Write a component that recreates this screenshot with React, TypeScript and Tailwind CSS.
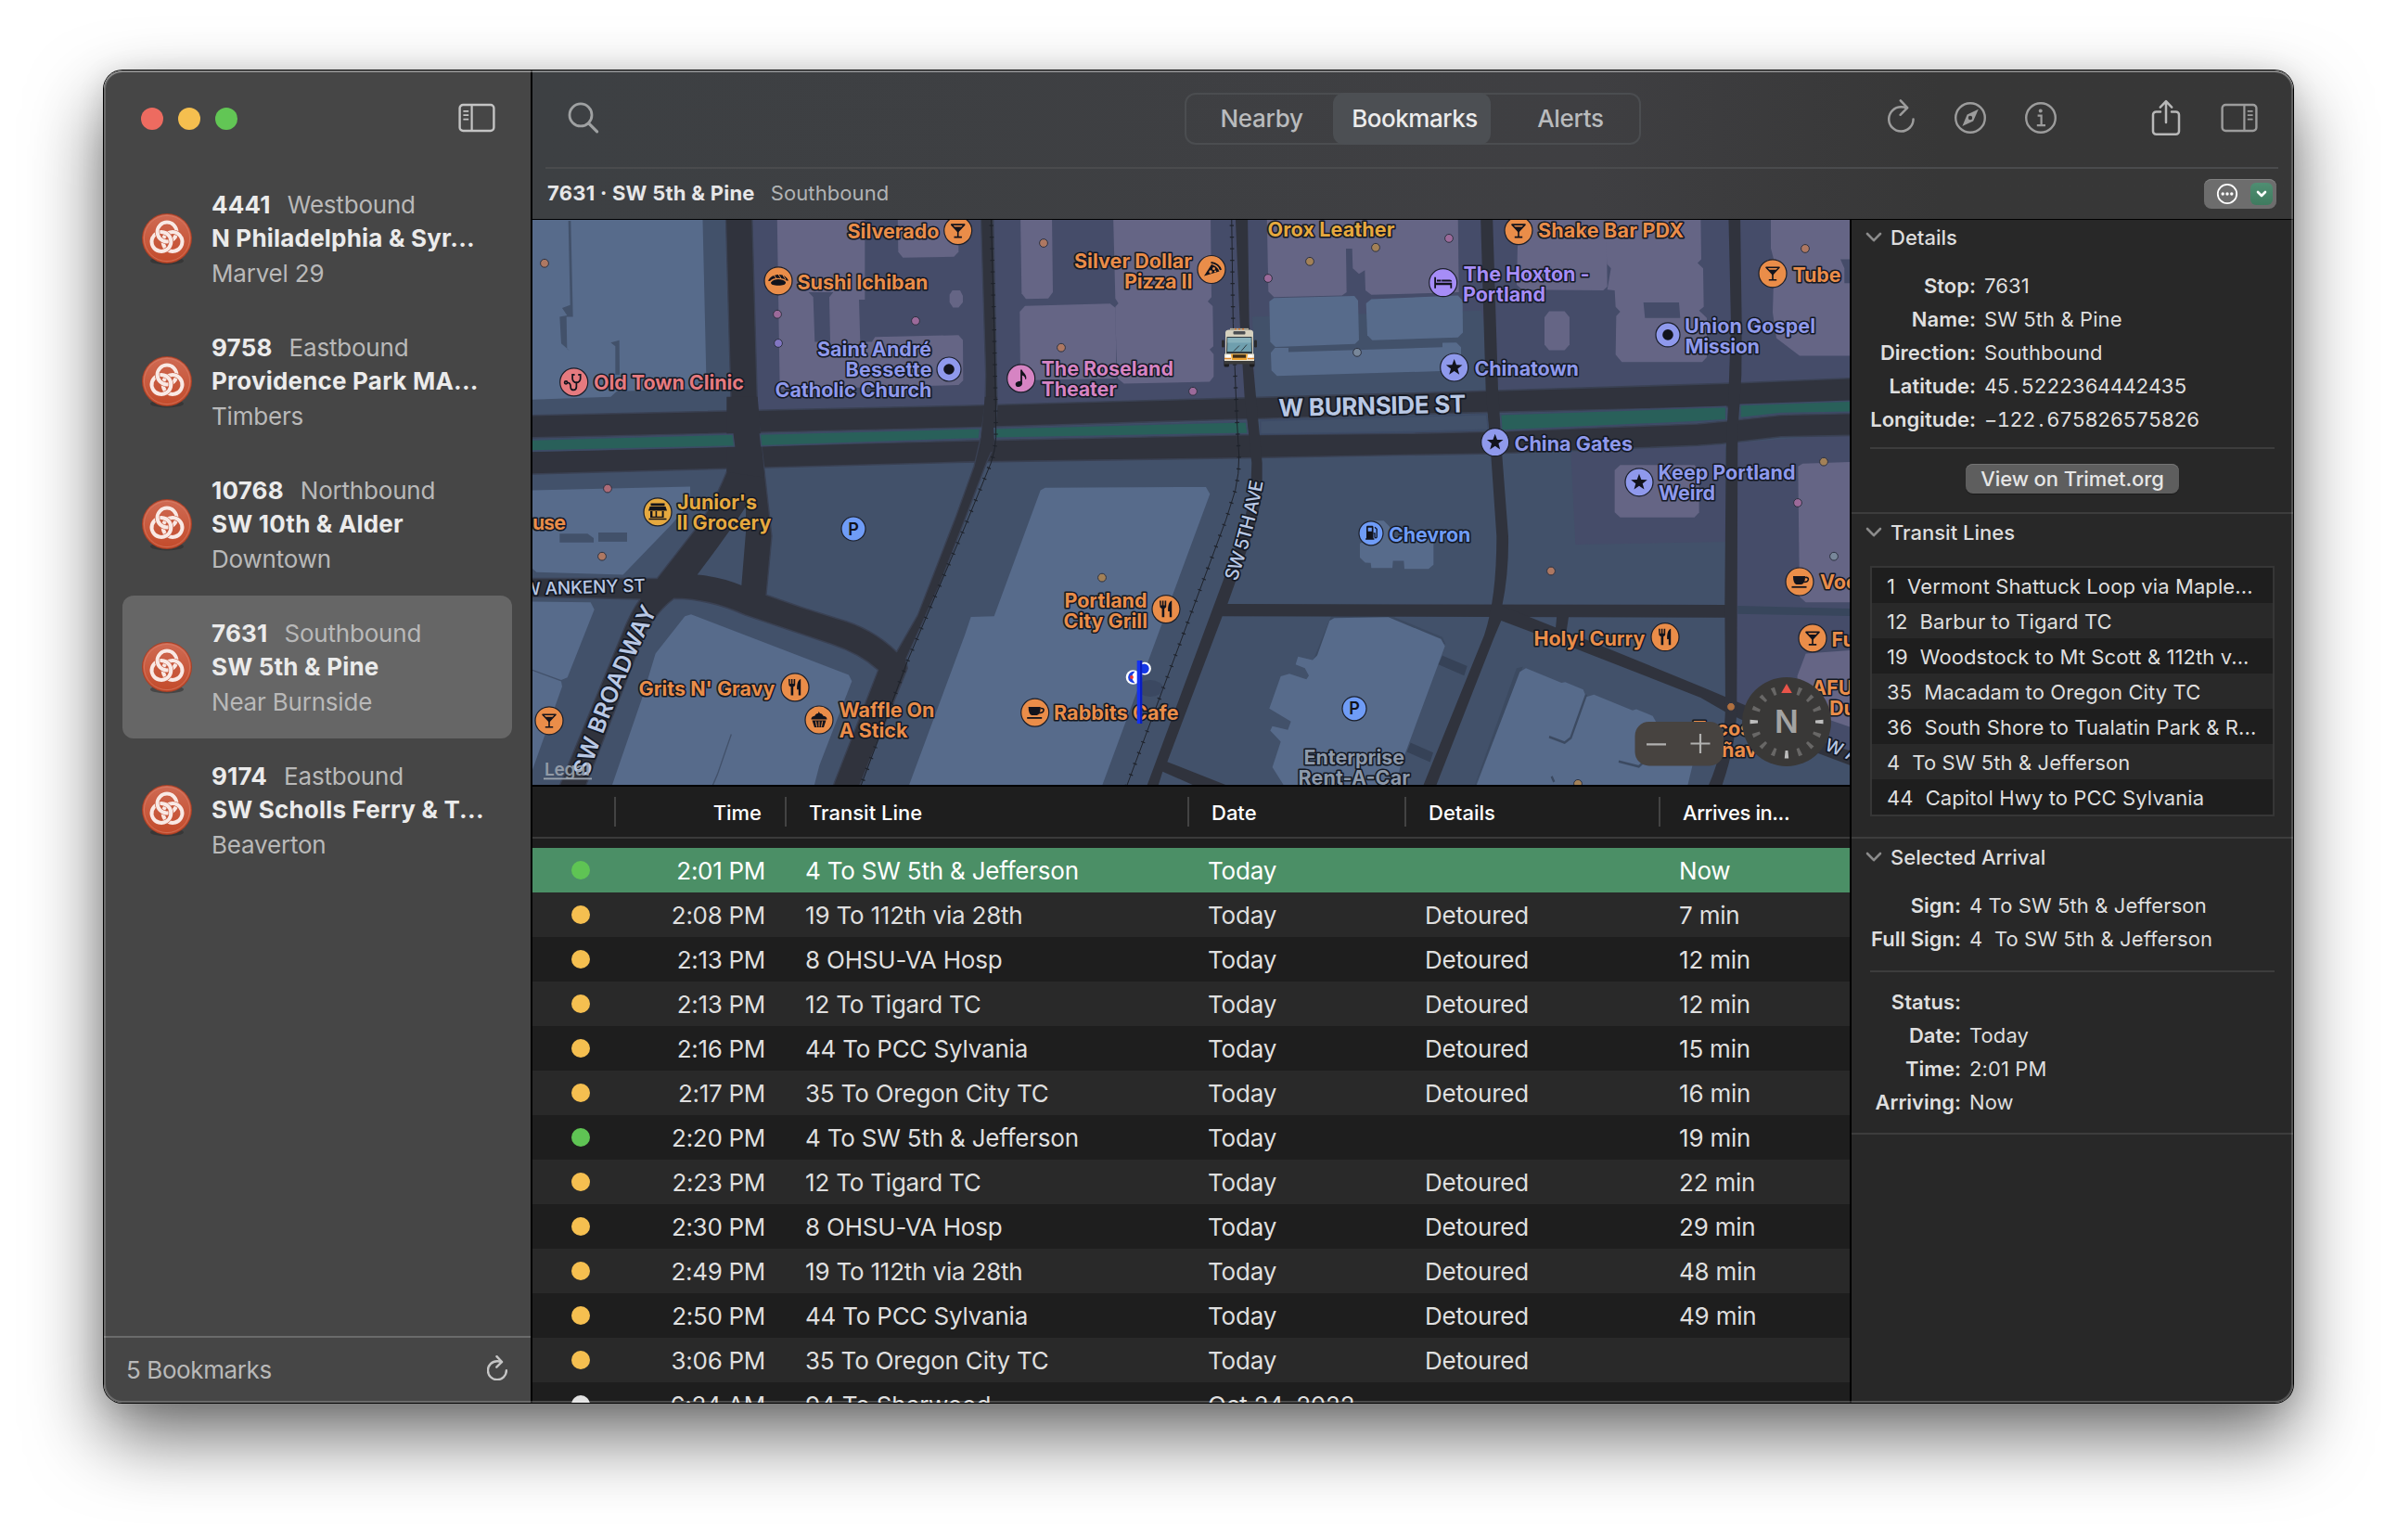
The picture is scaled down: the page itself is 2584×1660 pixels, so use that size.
import React from 'react';

/* ---------- data ---------- */

const bookmarks = [
  { id: '4441', dir: 'Westbound', name: 'N Philadelphia & Syr...', note: 'Marvel 29' },
  { id: '9758', dir: 'Eastbound', name: 'Providence Park MA...', note: 'Timbers' },
  { id: '10768', dir: 'Northbound', name: 'SW 10th & Alder', note: 'Downtown' },
  { id: '7631', dir: 'Southbound', name: 'SW 5th & Pine', note: 'Near Burnside', selected: true },
  { id: '9174', dir: 'Eastbound', name: 'SW Scholls Ferry & T...', note: 'Beaverton' },
];

const arrivals = [
  ['g', '2:01 PM', '4 To SW 5th & Jefferson', 'Today', '', 'Now'],
  ['y', '2:08 PM', '19 To 112th via 28th', 'Today', 'Detoured', '7 min'],
  ['y', '2:13 PM', '8 OHSU-VA Hosp', 'Today', 'Detoured', '12 min'],
  ['y', '2:13 PM', '12 To Tigard TC', 'Today', 'Detoured', '12 min'],
  ['y', '2:16 PM', '44 To PCC Sylvania', 'Today', 'Detoured', '15 min'],
  ['y', '2:17 PM', '35 To Oregon City TC', 'Today', 'Detoured', '16 min'],
  ['g', '2:20 PM', '4 To SW 5th & Jefferson', 'Today', '', '19 min'],
  ['y', '2:23 PM', '12 To Tigard TC', 'Today', 'Detoured', '22 min'],
  ['y', '2:30 PM', '8 OHSU-VA Hosp', 'Today', 'Detoured', '29 min'],
  ['y', '2:49 PM', '19 To 112th via 28th', 'Today', 'Detoured', '48 min'],
  ['y', '2:50 PM', '44 To PCC Sylvania', 'Today', 'Detoured', '49 min'],
  ['y', '3:06 PM', '35 To Oregon City TC', 'Today', 'Detoured', ''],
  ['w', '6:24 AM', '94 To Sherwood', 'Oct 24, 2022', '', ''],
];

const transitLines = [
  ['1', 'Vermont Shattuck Loop via Maple...'],
  ['12', 'Barbur to Tigard TC'],
  ['19', 'Woodstock to Mt Scott & 112th v...'],
  ['35', 'Macadam to Oregon City TC'],
  ['36', 'South Shore to Tualatin Park & R...'],
  ['4', 'To SW 5th & Jefferson'],
  ['44', 'Capitol Hwy to PCC Sylvania'],
];

/* ---------- icons ---------- */

function LineLogo() {
  return (
    <svg width="58" height="60" viewBox="-29 -29 58 60" className="block">
      <defs>
        <linearGradient id="badge" x1="0" y1="0" x2="0" y2="1">
          <stop offset="0" stopColor="#cf6a53" />
          <stop offset="1" stopColor="#c34b2b" />
        </linearGradient>
        <clipPath id="leftHalf">
          <rect x="-20" y="-9" width="20" height="24" />
        </clipPath>
      </defs>
      <ellipse cx="0" cy="24" rx="18" ry="4.4" fill="#2c2c2c" opacity="0.55" />
      <circle r="27" fill="#a93f25" />
      <circle r="26" fill="url(#badge)" />
      <circle r="24.6" fill="none" stroke="#dd8671" strokeWidth="1" opacity="0.55" />
      <g fill="none">
        {[0, 120, 240].map((a) => (
          <g key={a} transform={`rotate(${a})`}>
            <circle cy="-7" r="10.4" stroke="#c85a3e" strokeWidth="5.2" />
            <circle cy="-7" r="10.4" stroke="#f9e9e5" strokeWidth="4" />
          </g>
        ))}
        <g clipPath="url(#leftHalf)">
          <circle cy="-7" r="10.4" stroke="#c85a3e" strokeWidth="5.2" />
          <circle cy="-7" r="10.4" stroke="#f9e9e5" strokeWidth="4" />
        </g>
      </g>
    </svg>
  );
}

function PanelIcon({ right, color }: { right?: boolean; color: string }) {
  return (
    <svg width="40" height="32" viewBox="0 0 40 32" fill="none" stroke={color} className="block">
      <g transform={right ? 'translate(40 0) scale(-1 1)' : undefined}>
        <rect x="1.6" y="2" width="36.8" height="28" rx="3.6" strokeWidth="2.4" />
        <path d="M14.6 2v28" strokeWidth="2.2" />
        <path d="M5.4 8.8h5.8M5.4 13.2h5.8M5.4 17.6h5.8" strokeWidth="1.7" />
      </g>
    </svg>
  );
}

function Reload({ size, color, sw }: { size: number; color: string; sw: number }) {
  return (
    <svg width={size} height={size * 1.24} viewBox="0 0 29 36" fill="none" stroke={color} strokeWidth={sw} strokeLinecap="round" strokeLinejoin="round" className="block">
      <path d="M27.6 21.5A13.2 13.2 0 1 1 14.4 8.2c2 0 4.2.2 6.2 1.2" />
      <path d="M13.8 1.4l7.4 7.8-7.6 7.6" />
    </svg>
  );
}

/* ---------- sidebar ---------- */

function Sidebar() {
  return (
    <aside className="flex w-[462px] shrink-0 flex-col border-r-2 border-black bg-[#464646]">
      <div className="flex h-26 shrink-0 items-center justify-between pl-10 pr-[38px]">
        <div className="flex gap-4">
          <span className="size-6 rounded-full bg-[#ed6b60]" />
          <span className="size-6 rounded-full bg-[#f5bf4f]" />
          <span className="size-6 rounded-full bg-[#62c655]" />
        </div>
        <span className="pb-0.5">
          <PanelIcon color="#c4c4c4" />
        </span>
      </div>
      <ul className="flex flex-1 flex-col px-5">
        {bookmarks.map((b) => (
          <li key={b.id} className={`flex h-[154px] items-start rounded-xl pl-[19px] ${b.selected ? 'bg-[#666666]' : ''}`}>
            <div className="w-[77px] shrink-0 pt-12">
              <LineLogo />
            </div>
            <div className="pt-[23px] text-[26px] whitespace-nowrap">
              <div className="flex gap-[18px] leading-9">
                <span className="font-bold tracking-[0.2px] text-[#ebebeb]">{b.id}</span>
                <span className="tracking-[-0.2px] text-[#b9b9b9]">{b.dir}</span>
              </div>
              <div className="font-bold leading-9 tracking-[0.2px] text-[#ebebeb]">{b.name}</div>
              <div className="leading-10 tracking-[-0.2px] text-[#b9b9b9]">{b.note}</div>
            </div>
          </li>
        ))}
      </ul>
      <div className="flex h-[72px] shrink-0 items-center justify-between border-t-2 border-[#6a6b6b] pb-px pl-6 pr-[25px]">
        <span className="text-[26px] tracking-[-0.4px] text-[#b9b9b9]">5 Bookmarks</span>
        <span className="pb-1">
          <Reload size={22} color="#c6c6c6" sw={3.2} />
        </span>
      </div>
    </aside>
  );
}

/* ---------- toolbar ---------- */

function Toolbar() {
  return (
    <header className="flex h-[161px] shrink-0 flex-col border-b border-black bg-linear-to-r from-[#3d4043] via-[#3f3f42] via-60% to-[#373737] to-80%">
      <div className="flex h-26 items-center">
        <svg width="34" height="36" viewBox="0 0 34 36" fill="none" stroke="#9fa1a2" strokeWidth="2.8" strokeLinecap="round" className="ml-[38px] block">
          <circle cx="14" cy="13.9" r="12" />
          <path d="M22.6 22.9l9 9" strokeWidth="3.2" />
        </svg>
        <div className="ml-[631px] flex h-14 w-[492px] items-stretch rounded-xl pb-0.5 text-[26px] font-medium shadow-[inset_0_0_0_2px_#4b4d50]">
          <span className="flex w-40 items-center justify-center tracking-[-0.3px] text-[#b9bbbd]">
            <span className="pl-1.5">Nearby</span>
          </span>
          <span className="-mb-0.5 flex w-[170px] items-center justify-center rounded-xl bg-[#4c4f53] pb-0.5 tracking-[-0.5px] text-[#ececec]">
            <span className="pl-1.5">Bookmarks</span>
          </span>
          <span className="flex flex-1 items-center justify-center tracking-[-0.3px] text-[#b9bbbd]">
            <span className="pl-2.5">Alerts</span>
          </span>
        </div>
        <div className="ml-auto flex items-center pb-0.5 pr-[38px]">
          <span className="pb-1">
            <Reload size={29} color="#9c9c9c" sw={2.5} />
          </span>
          <svg width="36" height="36" viewBox="-18 -18 36 36" fill="none" stroke="#9c9c9c" strokeWidth="2.4" className="ml-[42px] block">
            <circle r="15.8" />
            <path fillRule="evenodd" fill="#9c9c9c" stroke="none" d="M8.8-9.2L3.2 3.4-8.6 9-3.4-3.4zM0-2.2a2.2 2.2 0 1 0 0 4.4 2.2 2.2 0 0 0 0-4.4z" />
          </svg>
          <svg width="36" height="36" viewBox="-18 -18 36 36" fill="none" stroke="#9c9c9c" strokeWidth="2.4" className="ml-10 block">
            <circle r="15.8" />
            <path d="M-3.4-2.4H.6V8M-4.2 8.2H5" strokeWidth="2.2" />
            <circle cx="-0.3" cy="-7.6" r="2" fill="#9c9c9c" stroke="none" />
          </svg>
          <svg width="32" height="40" viewBox="0 0 32 40" fill="none" stroke="#b8b8b8" strokeWidth="2.5" strokeLinecap="round" strokeLinejoin="round" className="ml-[101px] block">
            <path d="M10 13.4H5.4a3.4 3.4 0 0 0-3.4 3.4v17.6a3.4 3.4 0 0 0 3.4 3.4h21.2a3.4 3.4 0 0 0 3.4-3.4V16.8a3.4 3.4 0 0 0-3.4-3.4H22" />
            <path d="M16 25V2.4M9.8 8.6L16 2.2l6.2 6.400" />
          </svg>
          <span className="ml-[43px]">
            <PanelIcon right color="#9c9c9c" />
          </span>
        </div>
      </div>
      <div className="mx-4 ml-3.5 h-0.5 bg-[#4a4b4d]" />
      <div className="flex h-[54px] items-center whitespace-nowrap pl-4 pr-[18px] text-[22px]">
        <span className="pb-0.5 font-bold tracking-[0.25px] text-[#e6e6e7]">7631 · SW 5th &amp; Pine</span>
        <span className="ml-[17px] pb-0.5 tracking-[0.1px] text-[#b1b3b5]">Southbound</span>
        <div className="ml-auto flex h-8 w-[78px] items-center justify-between rounded-lg bg-[#6d6d6d] pl-[13px] pr-1 shadow-[inset_0_1px_0_#828282]">
          <svg width="24" height="24" viewBox="-12 -12 24 24" className="block">
            <circle r="10.2" fill="none" stroke="#fff" strokeWidth="1.8" />
            <circle cx="-4.8" r="1.7" fill="#fff" />
            <circle r="1.7" fill="#fff" />
            <circle cx="4.8" r="1.7" fill="#fff" />
          </svg>
          <span className="flex size-6 items-center justify-center rounded-[6px] bg-linear-to-b from-[#4f8e72] to-[#3f7b5f]">
            <svg width="12" height="8" viewBox="0 0 12 8" fill="none" stroke="#fff" strokeWidth="2.6" strokeLinecap="round" strokeLinejoin="round">
              <path d="M2 2l4 4 4-4" />
            </svg>
          </span>
        </div>
      </div>
    </header>
  );
}

/* ---------- map ---------- */

const LAND = '#42516a';
const PLUM = '#454c69';
const BLUE = '#576b8b';
const MAUVE = '#656585';
const ROAD = '#30333d';
const PARK = '#29605a';

const OR = '#ea8d49';
const YE = '#e6a93f';
const IN = '#8f99ec';
const PK = '#d684c3';
const RD = '#e67a7f';
const BL = '#6f9cf7';
const VI = '#a68df7';
const INK = '#12131c';

type LabelRow = [string, number, number, string, number?];
const labels: LabelRow[] = [
  ['Silverado', 913.5, 257, OR, 99],
  ['Sushi Ichiban', 859.5, 312, OR, 141],
  ['Old Town Clinic', 640, 420.6, RD, 162],
  ['Saint André', 881, 384, IN, 123],
  ['Bessette', 911.5, 406.3, IN, 93],
  ['Catholic Church', 835.5, 428.5, IN, 169],
  ["Junior's", 730, 549, YE, 86],
  ['II Grocery', 729.5, 571.6, YE, 102],
  ['use', 574, 571.2, OR, 36],
  ["Grits N' Gravy", 688.5, 750.7, OR, 147],
  ['Waffle On', 904.5, 773.3, OR, 103],
  ['A Stick', 904.5, 795.4, OR, 74],
  ['Silver Dollar', 1158, 289, OR, 127],
  ['Pizza II', 1212, 311, OR, 73.5],
  ['Orox Leather', 1366.5, 255.3, YE, 137],
  ['The Roseland', 1122.5, 405.5, PK, 142.5],
  ['Theater', 1122.5, 427.7, PK, 81.5],
  ['Portland', 1147.5, 655, OR, 89],
  ['City Grill', 1146.5, 677.2, OR, 90.5],
  ['Rabbits Cafe', 1136, 776.8, OR, 134.5],
  ['Enterprise', 1405.5, 824.7, '#8d99ab', 108.5],
  ['Rent-A-Car', 1399.5, 846.5, '#8d99ab', 120.5],
  ['Chevron', 1497, 584, BL, 88.5],
  ['Shake Bar PDX', 1658, 256.5, OR, 157],
  ['The Hoxton -', 1577.5, 303, VI, 136],
  ['Portland', 1577, 325.3, VI, 89],
  ['Tube', 1932.5, 304, OR, 52],
  ['Union Gospel', 1816, 359.3, IN, 141],
  ['Mission', 1816.5, 381.4, IN, 80.5],
  ['Chinatown', 1589.5, 405.2, IN, 112.5],
  ['China Gates', 1632.5, 486.2, IN, 127.5],
  ['Keep Portland', 1787.5, 517.5, IN, 148],
  ['Weird', 1788, 539.6, IN, 61],
  ['Vood', 1962, 635.3, OR],
  ['Holy! Curry', 1653.5, 696.2, OR, 120],
  ['Fu', 1974.5, 697, OR],
  ['AFU', 1953, 749.6, OR],
  ['Du', 1972, 771.7, OR],
  ['Tacos', 1825, 793.5, OR],
  ['ñav', 1856, 816.4, OR],
];

type DotRow = [number, number, string];
const BR = '#ae7862';
const OC = '#a38157';
const PI = '#9c6a9a';
const GY = '#78879a';
/* minor points of interest, in street-grid units */
const minorDots: DotRow[] = [
  [51, 136, BR], [804, 275, PI], [1251, 293, PI], [807, 354, '#8176c2'], [255, 750, '#ad6b77'], [237, 935, BR],
  [1665, 81, BR], [1722, 366, BR], [2148, 485, PI], [2391, 177, PI], [2526, 131, OC], [2739, 93, OC],
  [2679, 379, GY], [1854, 993, OC], [2976, 68, PI], [4128, 96, BR], [4188, 677, OC], [4104, 789, PI],
  [4221, 935, GY], [3306, 975, BR], [3888, 1345, '#b0703f'], [3393, 1555, OC],
];

const glyphs: Record<string, React.ReactNode> = {
  cocktail: (
    <g fill="none" stroke={INK} strokeWidth="1.6" strokeLinejoin="round">
      <path d="M-7-6.5H7L0 1z" />
      <path d="M0 0v6.6M-4.2 7H4.2" />
      <path d="M-4-4H4L0 1z" fill={INK} stroke="none" />
    </g>
  ),
  sushi: (
    <g fill={INK}>
      <path d="M-11 0C-9-5-3-7 1-6.8c5 .2 8.6 3 10 6.4L8.8-.2C7-2 4-3 0-3c-4 0-7 1.2-9 3.2z" />
      <path d="M-8 1.8C-6-1-3-1.8 0-1.8s6 .8 8 3C8.4 4 5 5 0 5s-8-.6-8-3.2z" />
      <path d="M-5-6.5l3 4M0-7.2l3 4.6M5-6.2l3 4.8" stroke={OR} strokeWidth="1" />
    </g>
  ),
  clinic: (
    <g fill="none" stroke={INK} strokeWidth="1.7" strokeLinecap="round">
      <path d="M.2-8H-1.600v4.200A4.200 4.200 0 0 0 7-3.800V-8H5.200" />
      <path d="M2.700.4v4.400c0 4.800-6.200 4.800-6.200.8 0-3-1.200-5-3.200-5" />
      <circle cx="-8.600" cy="0.400" r="1.500" />
    </g>
  ),
  dot: <circle r="5.8" fill={INK} />,
  store: (
    <g fill={INK}>
      <path d="M-7.5-9.5h15v2.800h-15zM-8.500-6h17l1.500 4.600h-20z" />
      <path d="M-8-.8h2.400v5.600h3.200V-.8h1.600v5.600h5.400V-.8h2v6.800H-8zM-9.500 6.800h19v1.500h-19z" />
    </g>
  ),
  fork: (
    <g fill={INK}>
      <path d="M-7-9h1.600v5h1.200v-5h1.600v5h1.200v-5H.2v6c0 1.400-1 2-2 2.400V8.600h-2.600V-.6c-1.200-.4-2.200-1-2.200-2.400z" />
      <path d="M6.200-9v17.600H3.800V2.400H2.200C1.800-3 3-8 6.200-9z" />
    </g>
  ),
  cupcake: (
    <g fill={INK}>
      <path d="M-8.500-.5c0-3 2.500-3.500 4-4 .5-2 2.500-2.500 3.500-2.500L-.5-9 1-7c2 .2 3 1.500 3.500 2.800 2 .4 4 1 4 3.700z" />
      <path d="M-7.500.5h15L5 8H-5z" />
      <path d="M-3.500 1.500l1 6M0 1.500v6M3.500 1.500l-1 6" stroke={OR} strokeWidth="1" />
    </g>
  ),
  pizza: (
    <g>
      <path d="M-8 7L0-5.500C5-4 7-1 8.500 2z" fill={INK} />
      <path d="M-.5-7.500C5-7 9-3.500 10 .5" stroke={INK} strokeWidth="2" fill="none" />
      <circle cx="-1" cy="2.500" r="1.700" fill={OR} />
      <circle cx="2.500" cy="-1" r="1.500" fill={OR} />
      <circle cx="4" cy="2" r="1.100" fill={OR} />
    </g>
  ),
  music: (
    <g fill={INK}>
      <ellipse cx="-2.400" cy="6" rx="3.600" ry="2.900" transform="rotate(-20 -2.400 6)" />
      <path d="M-.6 6V-9.500H1c.4 3 5.400 4.500 4.600 10l-1 .5C4.500-2 2.500-3 1.200-3.400V6z" />
    </g>
  ),
  gas: (
    <g fill={INK}>
      <path fillRule="evenodd" d="M-5-6.500c0-1 .6-1.500 1.500-1.500H1c1 0 1.500.5 1.500 1.500V5.500h.9V7h-9.300V5.500H-5zM-3.300-6v4H.8v-4z" />
      <path d="M4-6.500l2.200 2V4c0 1.500-2.200 1.500-2.200 0V0H2.500" fill="none" stroke={INK} strokeWidth="1.300" />
    </g>
  ),
  cup: (
    <g>
      <path d="M-7-6H6c0 5-1 8-4 9h-5.500C-6 2-7-1-7-6z" fill={INK} />
      <path d="M6-4.500c5-1 4.500 5 -1.500 5" fill="none" stroke={INK} strokeWidth="1.600" />
      <path d="M-8.500 5.800H7.500" stroke={INK} strokeWidth="1.800" />
    </g>
  ),
  bed: (
    <g fill={INK}>
      <path d="M-9.500-6h1.800v6H9.500v6H7.700V2.500H-7.700V6h-1.800z" />
      <path d="M-6.800-3.200h4.600v2h-4.600zM-1.500-3.200h8.500c1.500 0 2.500.8 2.500 2H-1.500z" />
    </g>
  ),
  star: <path fill={INK} d="M0-9L2.300-2.800 8.800-2.600 3.700 1.400 5.500 7.700 0 4-5.500 7.700-3.700 1.400-8.800-2.600-2.300-2.800z" />,
  park: (
    <text y="6.500" textAnchor="middle" fontSize="18" fontWeight="600" fill={INK}>
      P
    </text>
  ),
};

type PinRow = [string, number, number, string, number?];
const pins: PinRow[] = [
  ['cocktail', 1032.7, 248.6, OR],
  ['sushi', 839, 302.8, OR],
  ['clinic', 618.7, 411.9, RD],
  ['dot', 1023, 398, IN, 13],
  ['store', 709, 551.9, YE],
  ['park', 920, 570, BL, 13],
  ['fork', 857, 740.9, OR],
  ['cupcake', 883, 776, OR],
  ['cocktail', 592, 776.8, OR],
  ['pizza', 1306, 290.5, OR],
  ['music', 1100.7, 407.9, PK],
  ['gas', 1478, 574.8, BL, 13],
  ['fork', 1257, 656.6, OR],
  ['cup', 1115.7, 768.1, OR],
  ['park', 1460, 763.8, BL, 13],
  ['cocktail', 1637, 248.6, OR],
  ['bed', 1555.7, 304.7, VI],
  ['cocktail', 1911, 294.8, OR],
  ['dot', 1798, 360.9, IN, 13],
  ['star', 1567.7, 396, IN],
  ['star', 1611.7, 476.7, IN],
  ['star', 1767, 519.8, IN],
  ['cup', 1940, 627, OR],
  ['fork', 1795, 686.7, OR],
  ['cocktail', 1954, 687.9, OR],
];

const P = ({ d, f }: { d: string; f: string }) => <polygon points={d} fill={f} />;

function Streets() {
  return (
    <g transform="translate(570 230) scale(0.33333 0.39541)">
      {/* district tint */}
      <P f={PLUM} d="720,0 4290,0 4290,460 3140,485 3080,265 2340,282 2350,505 738,540" />
      <P f={PLUM} d="3370,650 3870,630 3870,895 3385,903" />
      <P f={PLUM} d="3900,625 4290,600 4290,1470 3900,1340" />

      {/* west buildings */}
      <P f={BLUE} d="0,0 562,0 575,478 285,485 265,500 0,508" />
      <P f={LAND} d="128,20 136,20 143,282 122,282 124,370 132,374 105,355 100,282 124,278 108,258 134,250" />
      <P f={LAND} d="265,352 293,346 294,440 280,440 280,362" />
      <P f={BLUE} d="0,755 522,745 522,790 460,850 305,985 25,978 0,960" />
      <P f={LAND} d="100,873 190,873 210,885 210,897 100,897" />
      <P f={LAND} d="225,870 318,870 318,895 225,895" />
      <P f={BLUE} d="0,1058 200,1060 212,1080 125,1265 105,1272 0,1240" />
      <P f={BLUE} d="0,1243 105,1276 108,1290 0,1545" />
      <P f={BLUE} d="505,1098 525,1093 1035,1258 1045,1275 940,1505 920,1570 265,1570 365,1325 410,1200" />
      <path d="M655 1420L610 1530L592 1565" stroke={LAND} fill="none" strokeWidth="4" />
      <P f={MAUVE} d="803,0 1087,0 1087,235 1068,235 1072,350 1110,350 1120,337 1390,332 1404,345 1405,455 1390,468 812,480" />
      <P f={PLUM} d="905,215 985,215 972,228 975,350 925,350 920,228" />
      <P f={MAUVE} d="1193,0 1390,0 1390,105 1375,118 1210,121 1195,105" />
      <P f={MAUVE} d="1370,210 1395,210 1404,225 1404,242 1390,257 1372,257 1361,242 1361,222" />

      {/* central buildings */}
      <g transform="translate(1410 0)">
        <P f={BLUE} d="20,1100 95,1098 245,755 260,748 780,746 793,765 440,1570 -185,1570 0,1150" />
        <P f={MAUVE} d="180,0 282,0 285,215 270,232 198,233 184,218" />
        <P f={MAUVE} d="480,0 795,0 798,228 786,240 802,253 804,362 792,371 805,384 805,445 792,459 515,464 495,450 490,370 487,255 497,245 487,232" />
        <P f={MAUVE} d="178,268 195,252 470,246 488,258 490,450 180,455" />
        <P f={MAUVE} d="977,0 1595,0 1598,215 1315,222 1296,210 1294,155 1275,165 1255,150 1253,96 1233,96 1235,215 1220,224 1000,228 982,213" />
        <P f={BLUE} d="985,240 1000,231 1260,225 1272,238 1275,345 1262,356 1005,364 988,350" />
        <P f={BLUE} d="1298,245 1315,234 1595,224 1610,238 1611,325 1595,338 1318,346 1302,332" />
        <P f={BLUE} d="990,380 1003,367 1047,367 1047,378 1545,365 1545,353 1590,352 1605,365 1605,420 1540,430 1010,443 992,428" />
        <P f={BLUE} d="1278,900 1300,890 1305,838 1355,838 1375,855 1375,880 1516,885 1516,958 1500,969 1422,969 1420,947 1385,947 1383,967 1315,967 1313,953 1295,952 1278,938" />
        <P f="#3c4a61" d="1185,1098 1375,1096 1545,1155 1555,1175 1195,1110 1142,1212 1125,1222" />
        <P f={BLUE} d="1195,1103 1370,1101 1540,1160 1553,1180 1410,1505 1390,1570 1040,1570 995,1510 1022,1440 988,1410 995,1398 1045,1408 1055,1385 985,1350 1022,1262 1050,1255 1105,1270 1113,1260 1100,1240 1070,1230 1078,1208 1125,1218 1140,1205 1180,1110" />
      </g>

      {/* east buildings */}
      <g transform="translate(2820 0)">
        <P f={MAUVE} d="390,0 665,0 668,200 655,210 393,208 375,195 378,90" />
        <P f={MAUVE} d="660,0 970,0 972,125 960,135 978,150 980,255 965,265 990,285 990,392 975,405 715,405 695,385 697,280 710,268 695,255 692,210 668,208 680,150 667,138" />
        <P f={PLUM} d="785,243 900,243 904,285 790,285" />
        <P f={MAUVE} d="480,267 530,267 546,283 546,358 530,373 480,373 465,358 465,283" />
        <P f={MAUVE} d="1197,0 1470,0 1470,388 1290,388 1215,340 1203,270 1208,130 1197,95" />
        <P f={PLUM} d="1422,125 1470,125 1470,190 1435,190 1435,150" />
        <P f={MAUVE} d="710,686 950,686 965,700 965,815 950,829 710,829 692,815 692,700" />
        <P f={MAUVE} d="1285,690 1300,682 1470,677 1470,1060 1310,1060 1290,1045" />
        <P f={MAUVE} d="1310,1200 1470,1190 1470,1405 1280,1350 1283,1260" />
        <P f="#3c4a61" d="375,1240 395,1236 250,1540 235,1570" />
        <P f={BLUE} d="385,1250 405,1240 520,1280 532,1278 590,1298 600,1318 625,1312 750,1355 762,1352 815,1370 825,1385 945,1500 925,1570 240,1570" />
        <path d="M600 1312L550 1430L530 1443L480 1427M812 1475L770 1508L705 1494M488 1535L496 1550" stroke="#3c4a61" fill="none" strokeWidth="7" />
        <P f="#364257" d="135,1206 215,1234 205,1260 122,1230" />
        <P f="#364257" d="32,1443 105,1470 95,1496 20,1468" />
        <P f="#38465c" d="1090,1070 1470,1078 1470,1098 1090,1092" />
      </g>

      {/* roads */}
      <g stroke="#3a4153" strokeWidth="4" strokeLinejoin="round">
        <P f={ROAD} d="0,551 1410,524 2820,491 3900,463 4290,449 4290,512 3900,527 2820,548 1410,584 0,612" />
        <P f={ROAD} d="0,649 1410,620 2310,604 2850,600 3120,595 3780,574 3880,566 4050,550 4290,545 4290,605 4050,609 3860,628 3780,633 3120,655 2820,659 2310,667 1410,678 0,711" />
        <path fill={ROAD} d="M637 0L722 0L740 540L762 700L778 820L786 880L768 1040Q880 1075 1000 1105Q1110 1130 1190 1195L1258 1095L1380 830L1440 690L1462 610L1476 520L1478 440L1462 0L1502 0L1515 520L1502 640L1480 680L1410 835L1330 1010L1220 1215L1225 1240L1065 1570L980 1570L1130 1245Q1070 1200 980 1175L700 1095Q580 1050 470 1050Q390 1100 350 1200L180 1570L95 1570L300 1150Q330 1085 360 1052L0 1045L0 995L415 995L540 860Q600 790 642 700L655 540Z" />
      </g>
      <path fill={LAND} d="M702 800L702 870L688 1014Q620 990 545 985Q640 880 702 800Z" />
      <P f={ROAD} d="640,500 740,500 762,720 640,705" />
      <P f={ROAD} d="1475,500 1515,500 1503,650 1460,650" />
      <g transform="translate(1410 0)" fill={ROAD}>
        <path d="M875 0L915 0L920 300L942 500L962 680L962 760Q950 830 920 900L850 1065L2460 1067L2460 1102L833 1098L655 1495L880 1570L770 1570L640 1522L622 1570L585 1570L845 980Q915 830 925 750L928 680L905 500L890 300Z" />
      </g>
      <g transform="translate(2820 0)">
        <path fill={ROAD} d="M258 0L297 0L315 480L328 660L348 880Q350 980 328 1070L425 1103L600 1162L980 1293L1120 1343L1300 1420L1470 1470L1470 1510L1280 1450L1060 1364L970 1320L560 1185L325 1110L300 1160L110 1570L68 1570L270 1150Q310 1050 310 880L292 660L275 480Z" />
        <path fill={ROAD} d="M1060 0L1098 0L1103 300L1102 440L1090 600L1087 1330Q1090 1440 1035 1570L990 1570Q1050 1460 1050 1340L1048 1060L1052 640L1060 500L1068 300Z" />
        <P f={ROAD} d="505,1095 544,1095 535,1145 500,1140" />
      </g>

      {/* medians */}
      <g stroke="#3d4b66" strokeWidth="4">
        <P f={PARK} d="0,617 660,602 665,635 0,648" />
        <P f={PARK} d="748,602 1460,586 1456,614 752,634" />
        <P f={PARK} d="1505,586 2320,568 2325,600 1507,613" />
        <P f={LAND} d="2366,565 3098,548 3103,590 2850,596 2366,602" />
        <P f={PARK} d="3143,548 3872,527 3872,563 3780,568 3147,592" />
        <P f={PARK} d="3918,522 4290,511 4290,542 4050,545 3918,558" />
      </g>

      {/* light-rail tracks */}
      <g fill="none" stroke="#1f232b">
        {['M1495 0L1505 300L1510 520L1511 610Q1508 650 1495 680L1410 855L1225 1220L1070 1570', 'M2273 0L2278 300L2290 560L2297 660Q2298 710 2285 755L2255 835L1930 1570'].map((d) => (
          <g key={d}>
            <path d={d} vectorEffect="non-scaling-stroke" strokeWidth="1" />
            <path d={d} vectorEffect="non-scaling-stroke" strokeWidth="4.4" strokeDasharray="1.2 11.3" />
          </g>
        ))}
      </g>
    </g>
  );
}

function Bus() {
  return (
    <g transform="translate(1336 375.5)">
      <rect x="-16.5" y="12" width="5.5" height="8" rx="1.5" fill="#1d1d1f" />
      <rect x="11" y="12" width="5.5" height="8" rx="1.5" fill="#1d1d1f" />
      <rect x="-19" y="-9" width="3" height="8" rx="1.2" fill="#2b2b2d" />
      <rect x="16" y="-9" width="3" height="8" rx="1.2" fill="#2b2b2d" />
      <path d="M-15-17q0-3 4-3H11q4 0 4 3V16H-15z" fill="#d6d1bf" />
      <path d="M-10-20.8H10" stroke="#b8b29e" strokeWidth="1.6" />
      <path d="M-5-20.8H5" stroke="#d9803a" strokeWidth="1.4" strokeDasharray="2 2" />
      <rect x="-6.5" y="-18.5" width="13" height="3.6" rx="1" fill="#4b4f52" />
      <path d="M-13.5-12.5H13.5L14 6H-14z" fill="#2f3a40" />
      <path d="M-12.5-11.5H12.5L13 3.500H-13z" fill="#6f9fae" />
      <path d="M-12.5-11.5H12.5L12.7-6H-12.7z" fill="#86b0bb" />
      <path d="M-6 3l6-6M2 3l6-7" stroke="#2f3a40" strokeWidth="1" />
      <path d="M-16 6H16V15.5H-16z" fill="#e8e3d3" />
      <path d="M-9 6H9L8 12.5H-8z" fill="#eda22f" />
      <rect x="-7" y="6.8" width="14" height="3.4" fill="#3a2c18" />
      <rect x="-14.5" y="7" width="5.5" height="3.6" rx="1.2" fill="#fff" />
      <rect x="9" y="7" width="5.5" height="3.6" rx="1.2" fill="#fff" />
      <path d="M-16 11H-9M9 11H16" stroke="#e0862c" strokeWidth="1.6" />
      <path d="M-16 13.5H16V17H-16z" fill="#3c3c3c" />
    </g>
  );
}

function StopSign() {
  return (
    <g>
      <ellipse cx="1240" cy="742" rx="14" ry="9" fill="#2e3a50" opacity="0.35" />
      <circle cx="1221.5" cy="730" r="7.8" fill="#fff" />
      <path d="M1223.500 723.800a6.300 6.300 0 1 0 0 12.400q-6.500-6.200 0-12.400z" fill="#1d3fe0" />
      <circle cx="1220" cy="730" r="1.9" fill="#f0352e" />
      <circle cx="1234" cy="720.7" r="6.9" fill="#fff" />
      <circle cx="1233.5" cy="720.7" r="5.2" fill="#1538e4" />
      <rect x="1225.7" y="712" width="5.5" height="68" fill="#1532f0" />
      <rect x="1229" y="712" width="2.2" height="68" fill="#0a1ec0" />
    </g>
  );
}

function MapView() {
  const halo = { paintOrder: 'stroke' as const, stroke: '#141924', strokeLinejoin: 'round' as const };
  return (
    <svg width="1420" height="609" viewBox="574 237 1420 609" className="block shrink-0" fontFamily='Inter, "Liberation Sans", sans-serif'>
      <defs>
        <path id="fifth" d="M1333 627Q1352 575 1363 512" />
        <path id="broadway" d="M634 838Q664 745 710 655" />
      </defs>
      <rect x="574" y="237" width="1420" height="609" fill={LAND} />
      <Streets />

      {minorDots.map(([x, y, c], i) => (
        <circle key={i} cx={570 + x / 3} cy={230 + y * 0.3954} r="4.4" fill={c} stroke="#2c3140" strokeWidth="1" />
      ))}

      <g {...halo} strokeWidth="3.5" fill="#b9c8e4">
        <text x="1378.5" y="449" fontSize="26" fontWeight="700" textLength="202" transform="rotate(-1.3 1378 449)">W BURNSIDE ST</text>
        <text x="564" y="641.5" fontSize="19" fontWeight="500" textLength="132" transform="rotate(-1.8 570 641)">W ANKENY ST</text>
        <text fontSize="20" fontWeight="500"><textPath href="#fifth" textLength="112">SW 5TH AVE</textPath></text>
        <text fontSize="25" fontWeight="600"><textPath href="#broadway" textLength="195">SW BROADWAY</textPath></text>
        <text x="1966" y="808" fontSize="19" fontWeight="500" transform="rotate(22 1966 808)">W A</text>
      </g>

      <g {...halo} strokeWidth="3.2" fontSize="21.5" fontWeight="700">
        {labels.map(([t, x, y, c, w]) => (
          <text key={t + x} x={x} y={y - 0.4} fill={c} textLength={w}>
            {t}
          </text>
        ))}
      </g>

      {pins.map(([g, x, y, c, r]) => (
        <g key={g + x} transform={`translate(${x} ${y})`}>
          <circle r={r ?? 15} fill={c} stroke="#1b1f2a" strokeWidth="1.2" />
          {glyphs[g]}
        </g>
      ))}

      <Bus />
      <StopSign />

      <text x="587" y="835.5" fontSize="19" fontWeight="600" fill="#9aa3ae" opacity="0.9" textLength="49">Legal</text>
      <rect x="586" y="838.5" width="52" height="1.8" fill="#9aa3ae" />

      {/* zoom control */}
      <rect x="1762.5" y="778" width="95.500" height="47.5" rx="15" fill="#474340" />
      <path d="M1775 802.3h21M1822.5 801.5h21M1833 791v21" stroke="#b1b1b0" strokeWidth="2.2" />

      {/* compass */}
      <g transform="translate(1926 778)">
        <circle r="48" fill="#393837" />
        {Array.from({ length: 15 }, (_, i) => (i + 1) * 22.5).map((a) => (
          <path key={a} transform={`rotate(${a})`} d="M-2.200-39.500H2.200L1.400-31H-1.400z" fill={a % 90 === 0 ? '#bdbdbd' : '#686766'} />
        ))}
        <path d="M0-41L5.800-31H-5.800z" fill="#e9544a" />
        <text y="12" textAnchor="middle" fontSize="34" fontWeight="600" fill="#a3a3a2">N</text>
      </g>
    </svg>
  );
}

/* ---------- arrivals table ---------- */

const dotClass: Record<string, string> = { g: 'bg-[#5fc454]', y: 'bg-[#f5bf50]', w: 'bg-[#e2e2e2]' };

function ArrivalsTable() {
  return (
    <div className="flex min-h-0 flex-1 flex-col overflow-hidden border-t-2 border-black bg-[#1e1e1e]">
      <div className="grid h-14 shrink-0 grid-cols-[90px_184px_434px_234px_274px_1fr] items-center border-b-2 border-[#3a3a3a] text-[22px] font-medium whitespace-nowrap text-white">
        <span className="h-8 border-r-2 border-[#434343]" />
        <span className="flex h-8 items-center justify-end border-r-2 border-[#434343] pt-0.5 pr-[25px]">Time</span>
        <span className="flex h-8 items-center border-r-2 border-[#434343] pt-0.5 pl-[24px]">Transit Line</span>
        <span className="flex h-8 items-center border-r-2 border-[#434343] pt-0.5 pl-[24px]">Date</span>
        <span className="flex h-8 items-center border-r-2 border-[#434343] pt-0.5 pl-[24px]">Details</span>
        <span className="flex h-8 items-center pt-0.5 pl-[24px] tracking-[-0.4px]">Arrives in...</span>
      </div>
      <div className="pt-2.5">
        {arrivals.map(([dot, time, line, date, det, arr], i) => (
          <div
            key={i}
            className={`grid h-12 grid-cols-[42px_209px_43px_434px_234px_274px_1fr] items-center text-[26px] tracking-[-0.2px] whitespace-nowrap ${
              i === 0 ? 'bg-[#4b8f66] text-white' : i % 2 ? 'bg-[#292929] text-[#dfdfdf]' : 'bg-[#1e1e1e] text-[#dfdfdf]'
            }`}
          >
            <span />
            <span className="flex items-center justify-between">
              <span className={`size-5 rounded-full ${dotClass[dot]}`} />
              <span className="tracking-[-0.3px]">{time}</span>
            </span>
            <span />
            <span>{line}</span>
            <span>{date}</span>
            <span>{det}</span>
            <span>{arr}</span>
          </div>
        ))}
      </div>
    </div>
  );
}

/* ---------- inspector ---------- */

function SectionTitle({ children }: { children: React.ReactNode }) {
  return (
    <div className="flex h-[38px] items-center pt-0.5 pl-[15px] text-[22px] font-medium text-[#dddddd]">
      <svg width="18" height="12" viewBox="0 0 18 12" fill="none" stroke="#8b8b8b" strokeWidth="2.6" strokeLinecap="round" strokeLinejoin="round" className="mr-[9px] block">
        <path d="M2 2l7 7.2L16 2" />
      </svg>
      {children}
    </div>
  );
}

function Field({ label, narrow, children }: { label: string; narrow?: boolean; children?: React.ReactNode }) {
  return (
    <div className="flex h-9 items-center gap-[9px] whitespace-nowrap text-[22px] text-[#dfdfdf]">
      <span className={`flex justify-end font-semibold ${narrow ? 'w-[98px]' : 'w-[114px]'}`}>{label}</span>
      <span className="tracking-[0.1px]">{children}</span>
    </div>
  );
}

function Inspector() {
  return (
    <aside className="flex w-[476px] shrink-0 flex-col bg-[#282828]">
      <section className="border-b-2 border-[#3d3d3d] pb-5">
        <div className="-mt-px">
          <SectionTitle>Details</SectionTitle>
        </div>
        <div className="px-5 pt-4">
          <Field label="Stop:">7631</Field>
          <Field label="Name:">SW 5th &amp; Pine</Field>
          <Field label="Direction:">Southbound</Field>
          <Field label="Latitude:">
            <span className="tracking-[-0.55px] tabular-nums">45<span className="px-[3.5px]">.</span>5222364442435</span>
          </Field>
          <Field label="Longitude:">
            <span className="tracking-[-0.55px] tabular-nums">−122<span className="px-[3.5px]">.</span>675826575826</span>
          </Field>
          <div className="mt-3 h-0.5 bg-[#3d3d3d]" />
          <div className="flex justify-center pt-4">
            <button className="h-8 w-[230px] rounded-lg bg-[#5e5e5e] text-[22px] font-medium tracking-[-0.1px] text-[#e6e6e6] shadow-[inset_0_1px_0_#747474,0_1px_1px_rgba(0,0,0,.3)]">View on Trimet.org</button>
          </div>
        </div>
      </section>
      <section className="border-b-2 border-[#3d3d3d] pb-[22px]">
        <SectionTitle>Transit Lines</SectionTitle>
        <ul className="mx-5 mt-[18px] border-2 border-[#363636]">
          {transitLines.map(([n, t], i) => (
            <li key={n} className={`flex h-[38px] items-center gap-[13px] pt-0.5 pl-4 text-[22px] tracking-[0.1px] whitespace-nowrap text-[#dfdfdf] ${i % 2 ? 'bg-[#292929]' : 'bg-[#1e1e1e]'}`}>
              <span>{n}</span>
              <span>{t}</span>
            </li>
          ))}
        </ul>
      </section>
      <section className="border-b-2 border-[#3d3d3d] pb-[15px]">
        <SectionTitle>Selected Arrival</SectionTitle>
        <div className="px-5 pt-4">
          <Field narrow label="Sign:">4 To SW 5th &amp; Jefferson</Field>
          <Field narrow label="Full Sign:">
            <span className="whitespace-pre">4  To SW 5th &amp; Jefferson</span>
          </Field>
          <div className="mt-4 mb-3.5 h-0.5 bg-[#3d3d3d]" />
          <Field narrow label="Status:" />
          <Field narrow label="Date:">Today</Field>
          <Field narrow label="Time:">2:01 PM</Field>
          <Field narrow label="Arriving:">Now</Field>
        </div>
      </section>
    </aside>
  );
}

/* ---------- window ---------- */

export default function App() {
  return (
    <div className="h-[1660px] w-[2584px] overflow-hidden bg-white pl-28 pt-19 font-[Inter,'Liberation_Sans',sans-serif] antialiased">
      <div className="relative h-[1436px] w-[2360px] rounded-[20px] shadow-[0_0_0_1px_#000,0_36px_80px_rgba(0,0,0,0.58),0_4px_30px_rgba(0,0,0,0.12)]">
        <div className="flex h-full w-full overflow-hidden rounded-[20px]">
          <Sidebar />
          <div className="flex min-w-0 flex-1 flex-col">
            <Toolbar />
            <div className="flex min-h-0 flex-1">
              <main className="flex w-[1422px] shrink-0 flex-col border-r-2 border-black">
                <MapView />
                <ArrivalsTable />
              </main>
              <Inspector />
            </div>
          </div>
        </div>
        <div className="pointer-events-none absolute inset-0 rounded-[20px] shadow-[inset_0_0_0_2px_rgba(255,255,255,0.2),inset_0_2px_0_rgba(255,255,255,0.2)]" />
      </div>
    </div>
  );
}
